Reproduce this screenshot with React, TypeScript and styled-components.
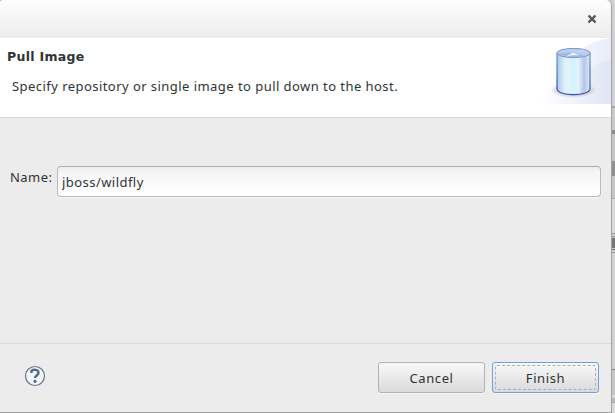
import React from 'react';
import styled, { createGlobalStyle } from 'styled-components';

const Global = createGlobalStyle`
  * { box-sizing: border-box; }
  body { margin: 0; background: #c9c9c9; overflow: hidden; }
`;

const Desktop = styled.div`
  display: flex;
  width: 615px;
  height: 413px;
  background: #c9c9c9;
  font-family: "Noto Sans", "Open Sans", sans-serif;
  font-size: 13px;
  letter-spacing: 0.45px;
  line-height: 18px;
  color: #2e3436;
`;

const Dialog = styled.main`
  display: flex;
  flex-direction: column;
  width: 612px;
  height: 413px;
  background: #ececec;
  border-right: 1px solid #a1a1a1;
  border-bottom: 1px solid #a1a1a1;
  border-radius: 4px 6px 0 0;
  overflow: hidden;
`;

const TitleBar = styled.header`
  display: flex;
  align-items: center;
  justify-content: flex-end;
  flex: 0 0 38px;
  padding-right: 14px;
  background: linear-gradient(#fdfdfd, #ececec);
`;

const CloseButton = styled.button`
  display: flex;
  padding: 0;
  border: 0;
  background: none;
`;

const Banner = styled.section`
  display: flex;
  justify-content: space-between;
  flex: 0 0 80px;
  background: #fff;
  border-bottom: 1px solid #d8d8d8;
`;

const BannerText = styled.div`
  padding: 10px 0 0 7px;
`;

const Heading = styled.h1`
  margin: 0;
  font-family: "DejaVu Sans", sans-serif;
  font-size: 12.5px;
  line-height: 18px;
  font-weight: 700;
  letter-spacing: 0.3px;
`;

const Description = styled.p`
  margin: 11px 0 0 5px;
  white-space: nowrap;
`;

const Form = styled.section`
  display: flex;
  align-items: flex-start;
  flex: 0 0 225px;
  padding: 48px 10px 0 10px;
`;

const Label = styled.label`
  flex: 0 0 47px;
  padding-top: 2px;
`;

const Field = styled.input`
  flex: 1;
  min-width: 0;
  height: 31px;
  padding: 1px 4px 0;
  border: 1px solid #b9b9b9;
  border-top-color: #a9aba9;
  border-radius: 4px;
  outline: 0;
  background: linear-gradient(#ededed, #f6f6f6 6px, #fff);
  box-shadow: 0 1px #f6f6f6;
  color: #2e3436;
  font: inherit;
  letter-spacing: inherit;
`;

const Footer = styled.footer`
  display: flex;
  align-items: flex-start;
  flex: 1;
  padding: 18px 12px 0 24px;
  border-top: 1px solid #dadada;
`;

const HelpButton = styled.button`
  display: flex;
  margin: 3px auto 0 0;
  padding: 0;
  border: 0;
  background: none;
`;

const Button = styled.button<{ $primary?: boolean }>`
  display: flex;
  width: 107px;
  height: 31px;
  margin-left: ${(p) => (p.$primary ? 7 : 0)}px;
  padding: 2px;
  border: 1px solid ${(p) => (p.$primary ? '#6fa0d8' : '#b2b2b2')};
  border-radius: 3px;
  background: linear-gradient(#f9f9f9, #dadada);
  box-shadow: 0 1px #f7f7f7;
  color: #2e3436;
  font: inherit;
  letter-spacing: 0.6px;
`;

const ButtonFace = styled.span<{ $focused?: boolean }>`
  display: flex;
  align-items: center;
  justify-content: center;
  flex: 1;
  height: 25px;
  padding-top: 1px;
  border: 1px dashed ${(p) => (p.$focused ? '#adb0b3' : 'transparent')};
  border-radius: 2px;
`;

const Backdrop = styled.aside`
  display: flex;
  flex-direction: column;
  width: 3px;
  background: #d0d0d0;
`;

const Strip = styled.div<{ $h: number; $c: string }>`
  flex: 0 0 ${(p) => p.$h}px;
  background: ${(p) => p.$c};
`;

const strips: [number, string][] = [
  [106, '#d2d2d2'], [2, '#aaaaaa'], [22, '#cacaca'], [4, '#8c8c8c'],
  [27, '#c5c5c5'], [15, '#919191'], [22, '#c5c5c5'], [1, '#aaaaaa'],
  [34, '#dadada'], [1, '#999999'], [2, '#cccccc'], [1, '#999999'],
  [1, '#c5c5c5'], [10, '#777777'], [1, '#cccccc'], [1, '#707070'],
  [2, '#cccccc'], [1, '#999999'], [116, '#d2d2d2'], [1, '#8c8c8c'],
  [25, '#c6c6c6'], [3, '#dadada'], [4, '#bababa'], [1, '#a5a5a5'],
  [10, '#dadada'],
];

const CloseIcon = () => (
  <svg width="10" height="10" viewBox="0 0 10 10">
    <path d="M1.5 1.5 8.5 8.5M8.5 1.5 1.5 8.5" stroke="#46545a" strokeWidth="2.3" />
  </svg>
);

const HelpIcon = () => (
  <svg width="22" height="22" viewBox="0 0 22 22" fill="none">
    <circle cx="11" cy="11" r="9.5" fill="#f4f5f7" stroke="#627795" strokeWidth="1.2" />
    <path d="M7.5 8.1V5.8C9.2 4.3 14.5 4.2 14.5 7.7c0 2.8-3.5 2.7-3.5 5.2" stroke="#526b91" strokeWidth="2.4" />
    <circle cx="11" cy="16.3" r="1.6" fill="#526b91" />
  </svg>
);

const Cylinder = () => (
  <svg width="72" height="66" viewBox="0 0 72 66">
    <defs>
      <linearGradient id="corner">
        <stop offset="0" stopColor="#fff" /><stop offset="1" stopColor="#dce3f6" />
      </linearGradient>
      <linearGradient id="body">
        <stop offset="0" stopColor="#a9c5ef" /><stop offset=".13" stopColor="#c4e0f3" />
        <stop offset=".25" stopColor="#e5f2fa" /><stop offset=".5" stopColor="#d2f3fd" />
        <stop offset=".65" stopColor="#e3f2fb" /><stop offset=".82" stopColor="#b5c5e7" />
        <stop offset="1" stopColor="#dce8f9" />
      </linearGradient>
      <linearGradient id="edge" x2="0" y2="1">
        <stop stopColor="#7695c0" /><stop offset="1" stopColor="#2856b0" />
      </linearGradient>
      <radialGradient id="shadow">
        <stop offset=".65" stopColor="#b58fa0" stopOpacity=".5" />
        <stop offset="1" stopColor="#d0a9af" stopOpacity="0" />
      </radialGradient>
    </defs>
    <path d="M0 66C20 35 28 7 72 0V66Z" fill="url(#corner)" opacity=".65" />
    <path d="M0 66C30 61 45 23 72 22V66Z" fill="url(#corner)" opacity=".75" />
    <ellipse cx="34.5" cy="52" rx="23" ry="8" fill="url(#shadow)" />
    <path d="M18 15V51C19 58.5 50 58.5 51 51V15Z" fill="url(#body)" stroke="url(#edge)" strokeWidth="1.2" />
    <ellipse cx="34.5" cy="15" rx="16.5" ry="4.6" fill="#b9cdef" stroke="#7896be" />
    <path d="M19 15C25 15 30 14.5 35 14.5L46 18C37 20 24 19 19 15Z" fill="#9bb8e6" />
    <path d="M27 18.5 34 14.5 41 17.5C36 17 32 17 27 18.5Z" fill="#edf6ff" />
    <path d="M36 14 44 11.5 49 14Z" fill="#c5d5f9" />
  </svg>
);

export default function App() {
  return (
    <>
      <Global />
      <Desktop>
        <Dialog>
          <TitleBar>
            <CloseButton aria-label="Close"><CloseIcon /></CloseButton>
          </TitleBar>
          <Banner>
            <BannerText>
              <Heading>Pull Image</Heading>
              <Description>Specify repository or single image to pull down to the host.</Description>
            </BannerText>
            <Cylinder />
          </Banner>
          <Form>
            <Label htmlFor="name">Name:</Label>
            <Field id="name" defaultValue="jboss/wildfly" spellCheck={false} />
          </Form>
          <Footer>
            <HelpButton aria-label="Help"><HelpIcon /></HelpButton>
            <Button><ButtonFace>Cancel</ButtonFace></Button>
            <Button $primary><ButtonFace $focused>Finish</ButtonFace></Button>
          </Footer>
        </Dialog>
        <Backdrop>
          {strips.map(([h, c], i) => <Strip key={i} $h={h} $c={c} />)}
        </Backdrop>
      </Desktop>
    </>
  );
}
